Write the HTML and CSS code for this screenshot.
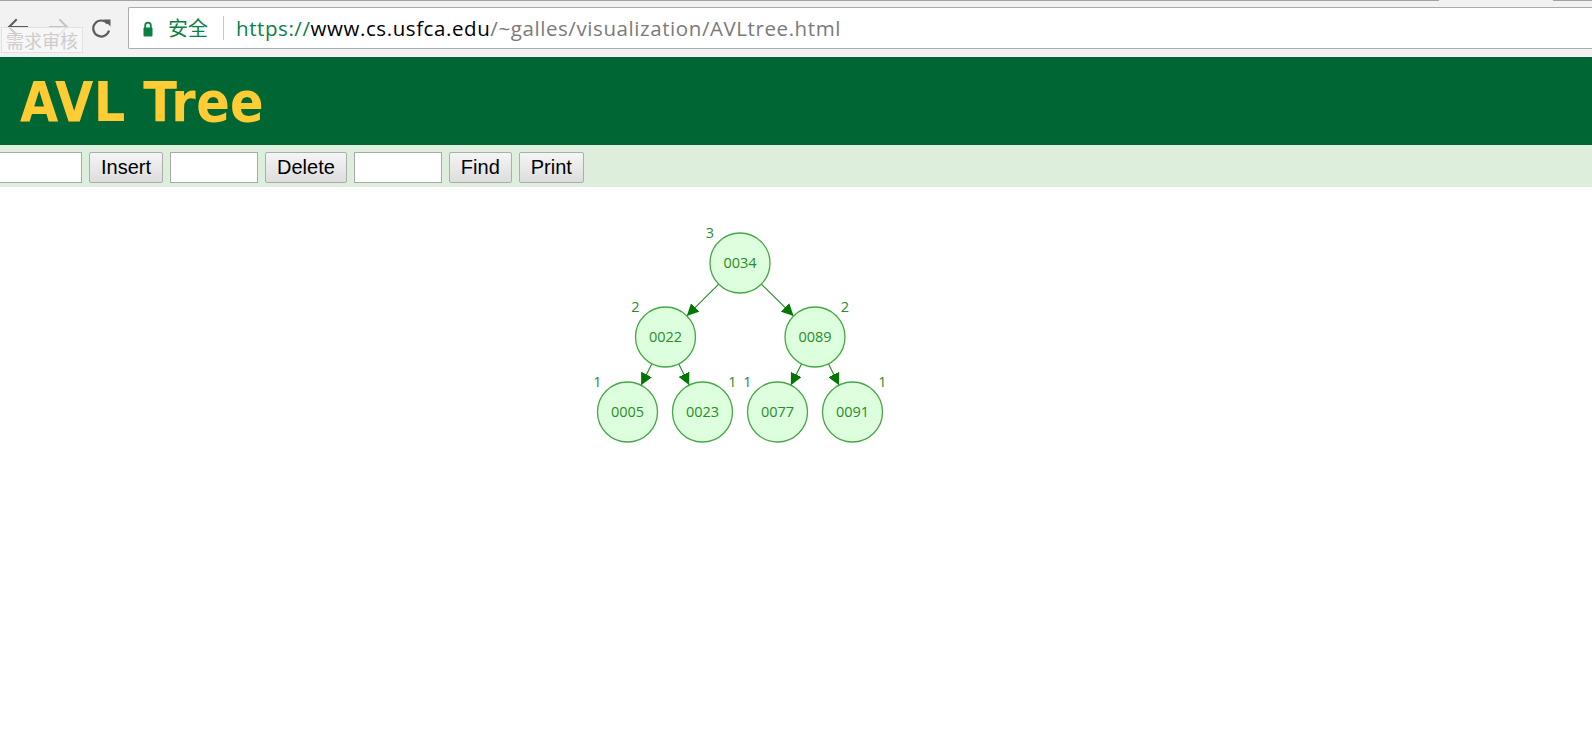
FILE: index.html
```html
<!DOCTYPE html>
<html>
<head>
<meta charset="utf-8">
<title>AVL Tree Visualzation</title>
<link rel="stylesheet" href="styles.css">
</head>
<body>
<div class="chrome">
  <div class="tabline"><span class="tab-a"></span><span class="tab-gap"></span><span class="tab-b"></span></div>
  <div class="chrome-row">
    <div class="nav">
      <svg width="128" height="42" viewBox="0 0 128 42">
        <g fill="none" stroke="#5c5c5c" stroke-width="2" stroke-linecap="square">
          <path d="M9 20 H27"/>
          <path d="M16 13 L9 20 L16 27"/>
        </g>
        <g fill="none" stroke="#c4c4c4" stroke-width="2" stroke-linecap="square">
          <path d="M50 20 H67"/>
          <path d="M60 13 L67 20 L60 27"/>
        </g>
        <g fill="none" stroke="#5c5c5c" stroke-width="2.2">
          <path d="M107.6 16.6 A8 8 0 1 0 109 23.5"/>
        </g>
        <path d="M103.5 12.5 L110.5 12.5 L110.5 19.5 Z" fill="#5c5c5c"/>
      </svg>
    </div>
    <div class="omnibox">
      <svg class="lock" width="10" height="16" viewBox="0 0 10 16">
        <path d="M2.2 7 V4.5 A2.8 2.8 0 0 1 7.8 4.5 V7" fill="none" stroke="#0b8043" stroke-width="1.8"/>
        <rect x="0.5" y="6.5" width="9" height="9" rx="1" fill="#0b8043"/>
      </svg>
      <span class="secure">安全</span>
      <span class="sep"></span>
      <span class="url"><span class="scheme">https://</span><span class="host">www.cs.usfca.edu</span><span class="path">/~galles/visualization/AVLtree.html</span></span>
    </div>
  </div>
  <div class="tip">需求审核</div>
</div>

<div class="header">
  <h1 class="title">AVL Tree</h1>
</div>

<div class="controls">
  <input class="field first" type="text">
  <button class="btn">Insert</button>
  <input class="field" type="text">
  <button class="btn">Delete</button>
  <input class="field" type="text">
  <button class="btn">Find</button>
  <button class="btn">Print</button>
</div>

<div class="canvas">
  <svg class="tree" width="1592" height="560" viewBox="0 0 1592 560">
    <defs>
      <marker id="arrow" markerUnits="userSpaceOnUse" markerWidth="12" markerHeight="12" refX="12" refY="6" orient="auto">
        <path d="M0 0 L12 6 L0 12 Z" fill="#007700"/>
      </marker>
    </defs>
    <g class="links" stroke="#1f8a1f" stroke-width="1.1" marker-end="url(#arrow)">
      <line x1="718.7" y1="97.1" x2="686.8" y2="128.9"/>
      <line x1="761.3" y1="97.1" x2="793.6" y2="128.9"/>
      <line x1="651.9" y1="176.8" x2="641.1" y2="198.2"/>
      <line x1="678.8" y1="176.9" x2="689.2" y2="198.1"/>
      <line x1="801.6" y1="176.8" x2="790.9" y2="198.2"/>
      <line x1="828.4" y1="176.8" x2="839.1" y2="198.2"/>
    </g>
    <g class="nodes">
      <circle cx="740" cy="76" r="30"/>
      <circle cx="665.5" cy="150" r="30"/>
      <circle cx="815" cy="150" r="30"/>
      <circle cx="627.5" cy="225" r="30"/>
      <circle cx="702.5" cy="225" r="30"/>
      <circle cx="777.5" cy="225" r="30"/>
      <circle cx="852.5" cy="225" r="30"/>
    </g>
    <g class="keys">
      <text x="740" y="81">0034</text>
      <text x="665.5" y="155">0022</text>
      <text x="815" y="155">0089</text>
      <text x="627.5" y="230">0005</text>
      <text x="702.5" y="230">0023</text>
      <text x="777.5" y="230">0077</text>
      <text x="852.5" y="230">0091</text>
    </g>
    <g class="heights">
      <text x="710" y="51">3</text>
      <text x="635.5" y="125">2</text>
      <text x="845" y="125">2</text>
      <text x="597.5" y="200">1</text>
      <text x="732.5" y="200">1</text>
      <text x="747.5" y="200">1</text>
      <text x="882.5" y="200">1</text>
    </g>
  </svg>
</div>
</body>
</html>
```

FILE: styles.css
```css
html, body {
  margin: 0;
  padding: 0;
  background: #ffffff;
  overflow: hidden;
}

body {
  width: 1592px;
  height: 747px;
  font-family: "Liberation Sans", Arial, sans-serif;
}

/* ---------- browser chrome ---------- */
.chrome {
  position: relative;
  height: 57px;
  background: #f2f2f2;
}

.tabline {
  display: flex;
  height: 1px;
}
.tab-a { width: 1439px; background: #a3a3a3; }
.tab-gap { width: 114px; }
.tab-b { flex: 1; background: #a3a3a3; }

.chrome-row {
  display: flex;
  padding-top: 6px;
}

.nav {
  width: 128px;
  height: 42px;
  flex: none;
}
.nav svg { display: block; }

.omnibox {
  flex: 1;
  height: 42px;
  box-sizing: border-box;
  background: #ffffff;
  border: 1px solid #ababab;
  border-right: none;
  border-radius: 2px 0 0 2px;
  display: flex;
  align-items: center;
  padding-left: 14px;
}

.lock {
  display: block;
  flex: none;
  margin-top: 1px;
}

.secure {
  margin-left: 15px;
  font-family: "Noto Sans CJK SC", sans-serif;
  font-size: 20px;
  color: #0b8043;
  line-height: 1;
}

.sep {
  width: 1px;
  height: 24px;
  background: #c8c8c8;
  margin-left: 15px;
  margin-right: 12px;
}

.url {
  font-family: "Open Sans", "Liberation Sans", sans-serif;
  font-size: 20.5px;
  letter-spacing: 0.58px;
  line-height: 1;
  white-space: nowrap;
}
.scheme { color: #0b8043; }
.host { color: #000000; }
.path { color: #7a7a7a; }

.tip {
  position: absolute;
  left: 1px;
  top: 27px;
  width: 82px;
  height: 26px;
  box-sizing: border-box;
  background: rgba(248, 248, 248, 0.72);
  border: 1px solid #e2e2e2;
  color: #cdcdcd;
  font-family: "Noto Sans CJK SC", sans-serif;
  font-size: 18px;
  line-height: 24px;
  padding-left: 4px;
  white-space: nowrap;
}

/* ---------- page header ---------- */
.header {
  height: 88px;
  background: #006633;
  box-sizing: border-box;
  padding: 18px 0 0 20px;
}

.title {
  margin: 0;
  font-family: "DejaVu Sans Condensed", "DejaVu Sans", sans-serif;
  font-stretch: condensed;
  font-weight: bold;
  font-size: 55px;
  letter-spacing: 0.4px;
  line-height: 55px;
  color: #ffcc33;
}

/* ---------- control bar ---------- */
.controls {
  height: 42px;
  box-sizing: border-box;
  background: #ddeedd;
  display: flex;
  align-items: flex-start;
  gap: 7px;
  padding-top: 7px;
}

.field {
  width: 88px;
  height: 31px;
  box-sizing: border-box;
  margin: 0;
  border: 1px solid #a9a9a9;
  background: #ffffff;
  padding: 0;
}
.field.first { margin-left: -6px; }

.btn {
  height: 31px;
  box-sizing: border-box;
  margin: 0;
  padding: 0 11px;
  border: 1px solid #adadad;
  border-radius: 2px;
  background: linear-gradient(#f5f5f5, #dddddd);
  font-family: "Liberation Sans", Arial, sans-serif;
  font-size: 20px;
  line-height: 29px;
  color: #000000;
}

/* ---------- drawing canvas ---------- */
.canvas {
  height: 560px;
}
.tree { display: block; }

.nodes circle {
  fill: #ddffdd;
  stroke: #47a647;
  stroke-width: 1.3;
}

.keys text {
  font-family: "Open Sans", "Liberation Sans", sans-serif;
  font-size: 14.5px;
  fill: #2a8c2a;
  text-anchor: middle;
}

.heights text {
  font-family: "Open Sans", "Liberation Sans", sans-serif;
  font-size: 14.5px;
  fill: #2a8c2a;
  text-anchor: middle;
}
```
